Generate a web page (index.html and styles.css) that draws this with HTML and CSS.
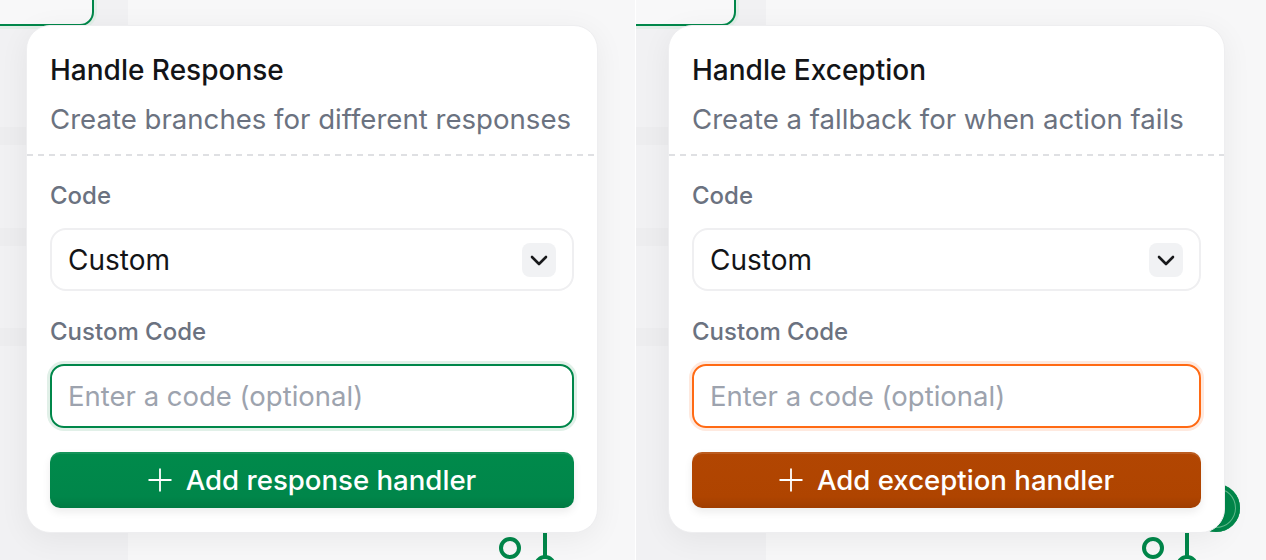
FILE: index.html
```html
<!DOCTYPE html>
<html lang="en">
<head>
<meta charset="utf-8">
<title>Handlers</title>
<link rel="stylesheet" href="styles.css">
</head>
<body>
<div class="panes">
  <section class="pane pane-left">
    <div class="canvas-col"></div>
    <div class="node-top"></div>
    <svg class="connectors" width="80" height="40" viewBox="0 0 80 40">
      <circle cx="22" cy="16" r="9" fill="none" stroke="#00874a" stroke-width="4"/>
      <line x1="57" y1="0" x2="57" y2="24" stroke="#00874a" stroke-width="4"/>
      <circle cx="57" cy="34" r="9" fill="none" stroke="#00874a" stroke-width="4"/>
    </svg>
    <div class="card">
      <header class="card-head">
        <h2 class="title">Handle Response</h2>
        <p class="subtitle">Create branches for different responses</p>
      </header>
      <div class="card-body">
        <div class="field">
          <span class="label">Code</span>
          <div class="select">
            <span class="select-value">Custom</span>
            <span class="chev"><svg width="20" height="20" viewBox="0 0 20 20"><path d="M3 7l7 7 7-7" fill="none" stroke="#18191b" stroke-width="2.6" stroke-linecap="round" stroke-linejoin="round"/></svg></span>
          </div>
        </div>
        <div class="field">
          <span class="label">Custom Code</span>
          <div class="input input-green"><span class="placeholder">Enter a code (optional)</span></div>
        </div>
        <button class="btn btn-green"><svg class="plus" width="24" height="24" viewBox="0 0 24 24"><path d="M12 0.5v23M0.5 12h23" stroke="#fff" stroke-width="1.8" fill="none"/></svg><span>Add response handler</span></button>
      </div>
    </div>
  </section>
  <div class="sep"></div>
  <section class="pane pane-right">
    <div class="canvas-col canvas-col-r"></div>
    <div class="node-top node-top-r"></div>
    <div class="blob"></div>
    <svg class="connectors connectors-r" width="80" height="40" viewBox="0 0 80 40">
      <circle cx="22" cy="16" r="9" fill="none" stroke="#00874a" stroke-width="4"/>
      <line x1="56" y1="0" x2="56" y2="24" stroke="#00874a" stroke-width="4"/>
      <circle cx="56" cy="34" r="9" fill="none" stroke="#00874a" stroke-width="4"/>
    </svg>
    <div class="card card-r">
      <header class="card-head">
        <h2 class="title">Handle Exception</h2>
        <p class="subtitle">Create a fallback for when action fails</p>
      </header>
      <div class="card-body">
        <div class="field">
          <span class="label">Code</span>
          <div class="select">
            <span class="select-value">Custom</span>
            <span class="chev"><svg width="20" height="20" viewBox="0 0 20 20"><path d="M3 7l7 7 7-7" fill="none" stroke="#18191b" stroke-width="2.6" stroke-linecap="round" stroke-linejoin="round"/></svg></span>
          </div>
        </div>
        <div class="field">
          <span class="label">Custom Code</span>
          <div class="input input-orange"><span class="placeholder">Enter a code (optional)</span></div>
        </div>
        <button class="btn btn-orange"><svg class="plus" width="24" height="24" viewBox="0 0 24 24"><path d="M12 0.5v23M0.5 12h23" stroke="#fff" stroke-width="1.8" fill="none"/></svg><span>Add exception handler</span></button>
      </div>
    </div>
  </section>
</div>
</body>
</html>
```
FILE: styles.css
```css
* { box-sizing: border-box; }
html, body { margin: 0; padding: 0; }
body {
  font-family: Inter, "Noto Sans", sans-serif;
  background: #f6f6f7;
  width: 1266px;
  height: 560px;
  overflow: hidden;
}
.panes { display: flex; height: 560px; }
.sep { width: 1px; background: #ffffff; }
.pane {
  position: relative;
  height: 560px;
  overflow: hidden;
  background: #f7f7f8;
}
.pane-left { width: 635px; padding: 25px 0 0 26px; }
.pane-right { width: 630px; padding: 25px 0 0 32px; }

.canvas-col {
  position: absolute;
  left: 0; top: 0;
  width: 128px; height: 560px;
  background:
    linear-gradient(#ededef, #ededef) 0 127px / 100% 18px no-repeat,
    linear-gradient(#ededef, #ededef) 0 228px / 100% 18px no-repeat,
    linear-gradient(#ededef, #ededef) 0 328px / 100% 18px no-repeat,
    #f1f1f3;
}
.canvas-col-r { width: 130px; }
.node-top {
  position: absolute;
  left: -20px; top: -20px;
  width: 114px; height: 46px;
  border: 2px solid #00874a;
  border-radius: 14px;
  background: #f8f8f9;
  box-shadow: 0 0 0 3px #e2efe8;
}
.node-top-r { width: 120px; }
.connectors { position: absolute; left: 488px; top: 532px; }
.connectors-r { left: 495px; }
.blob {
  position: absolute;
  left: 556px; top: 484px;
  width: 48px; height: 48px;
  border-radius: 50%;
  background: #00874a;
  box-shadow: inset 0 0 0 4px #00874a, inset 0 0 0 5px #5fb98b;
}

.card {
  position: relative;
  width: 572px;
  height: 508px;
  background: #fff;
  border: 1px solid #eeeef0;
  border-radius: 24px;
  box-shadow: 0 6px 30px rgba(0, 0, 0, 0.06);
}
.card-r { width: 557px; }
.card-head {
  padding: 26px 23px 19px;
  background: repeating-linear-gradient(90deg, #dfe0e3 0 6px, transparent 6px 11px) 0 100% / 100% 2px no-repeat;
}
.title {
  margin: 0;
  font-size: 28px;
  line-height: 36px;
  font-weight: 500;
  color: #131417;
  white-space: nowrap;
}
.subtitle {
  margin: 13px 0 0;
  font-size: 27.6px;
  line-height: 36px;
  font-weight: 400;
  color: #6b7280;
  white-space: nowrap;
}
.card-body {
  padding: 25px 23px 24px;
  display: flex;
  flex-direction: column;
}
.field { display: flex; flex-direction: column; gap: 17px; margin-bottom: 26px; }
.field + .field { margin-bottom: 24px; }
.label {
  font-size: 24px;
  line-height: 30px;
  font-weight: 500;
  color: #6b7280;
}
.select {
  height: 63px;
  border: 2px solid #efeff1;
  border-radius: 16px;
  display: flex;
  align-items: center;
  justify-content: space-between;
  padding: 0 16px 0 16px;
}
.select-value { font-size: 28px; color: #131417; }
.chev {
  width: 34px; height: 34px;
  border-radius: 8px;
  background: #f1f2f4;
  display: flex;
  align-items: center;
  justify-content: center;
}
.input {
  height: 64px;
  border-radius: 14px;
  border: 2px solid #00874a;
  display: flex;
  align-items: center;
  padding: 0 16px;
}
.input-green { box-shadow: 0 0 0 3px #e1f0e8; }
.input-orange { border-color: #ff6a14; box-shadow: 0 0 0 3px #fee9df; }
.placeholder { font-size: 27.5px; color: #9da3ae; }

.btn {
  height: 56px;
  border: 0;
  border-radius: 10px;
  display: flex;
  align-items: center;
  justify-content: center;
  gap: 14px;
  font-family: inherit;
  font-size: 27.6px;
  font-weight: 500;
  color: #fff;
  padding: 0;
}
.btn-green {
  background: linear-gradient(#008a4b, #00864a 80%, #007a42);
  box-shadow: inset 0 2px 0 rgba(255,255,255,0.08), 0 4px 8px rgba(0, 0, 0, 0.08);
}
.btn-orange {
  background: linear-gradient(#b24602, #af4400 80%, #a03d00);
  box-shadow: inset 0 2px 0 rgba(255,255,255,0.12), 0 4px 8px rgba(0, 0, 0, 0.08);
}
.plus { display: block; }
```
